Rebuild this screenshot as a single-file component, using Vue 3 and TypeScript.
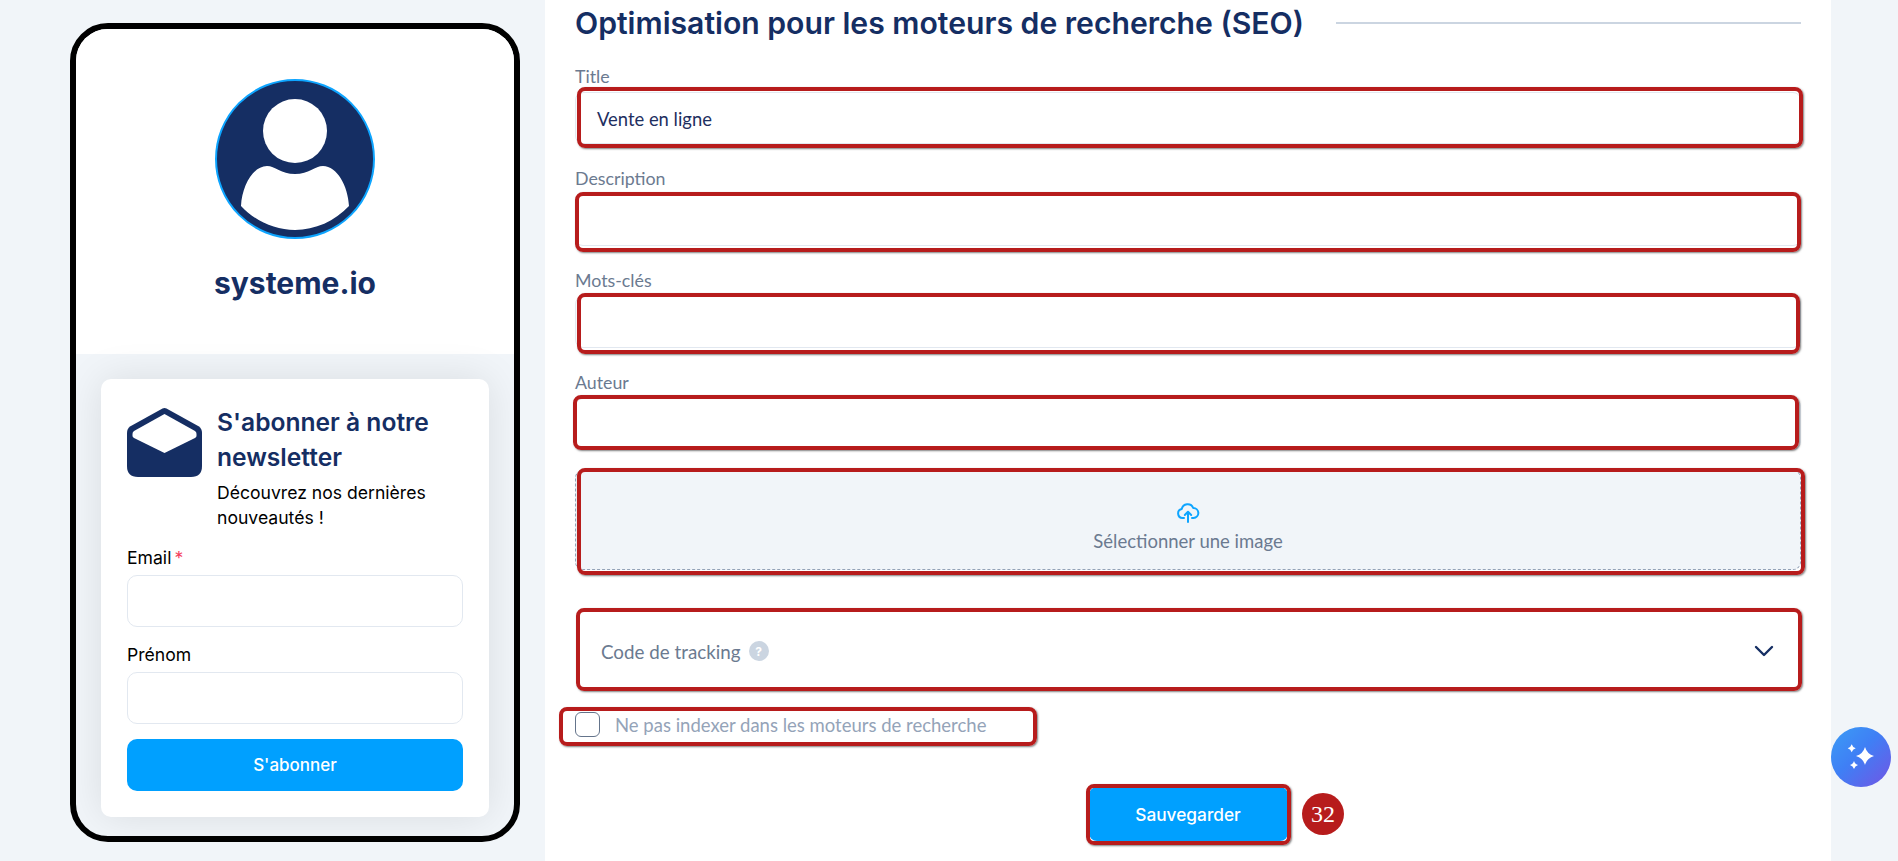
<script setup lang="ts">
const fields: { label: string; value: string }[] = [
  { label: 'Title', value: 'Vente en ligne' },
  { label: 'Description', value: '' },
  { label: 'Mots-clés', value: '' },
  { label: 'Auteur', value: '' },
]
const marks: string[] = ['m-title', 'm-desc', 'm-keys', 'm-author', 'm-image', 'm-code', 'm-check', 'm-save']
</script>

<template>
  <div class="page">
    <aside class="side">
      <div class="phone">
        <section class="hero">
          <svg class="avatar" viewBox="0 0 160 160" aria-hidden="true">
            <circle cx="80" cy="80" r="79" fill="#152e63" stroke="#0ea5ff" stroke-width="2" />
            <circle cx="80" cy="52" r="32" fill="#fff" />
            <path d="M26 127C27 107 38 87 52 87C60 87 66 95 80 95C94 95 100 87 108 87C122 87 133 107 134 127C120 142 100 151 80 151C60 151 40 142 26 127Z" fill="#fff" />
          </svg>
          <h2 class="brand">systeme.io</h2>
        </section>
        <section class="lower">
          <div class="card">
            <div class="news-head">
              <svg class="envelope" viewBox="0 0 75 69" aria-hidden="true">
                <path d="M35.500 .6Q37.500 -.4 39.500 .6L72 18.500Q75 20.500 75 25V58Q75 69 64 69H11Q0 69 0 58V25Q0 20.500 3 18.500Z" fill="#152e63" />
                <path d="M37.500 6L68 23Q69.500 24 69.500 26V28Q69.500 29 68 30L37.500 45L7 30Q5.500 29 5.500 28V26Q5.500 24 7 23Z" fill="#fff" />
              </svg>
              <div class="news-copy">
                <h3>S'abonner à notre newsletter</h3>
                <p>Découvrez nos dernières nouveautés !</p>
              </div>
            </div>
            <label class="sub-label">Email<span class="req">*</span></label>
            <div class="sub-input"></div>
            <label class="sub-label">Prénom</label>
            <div class="sub-input"></div>
            <button class="sub-btn">S'abonner</button>
          </div>
        </section>
      </div>
    </aside>

    <main class="panel">
      <header class="seo-head">
        <h1>Optimisation pour les moteurs de recherche (SEO)</h1>
        <span class="rule"></span>
      </header>
      <div v-for="f in fields" :key="f.label" class="field">
        <label>{{ f.label }}</label>
        <div class="input">{{ f.value }}</div>
      </div>
      <div class="upload">
        <svg width="24" height="24" viewBox="0 0 24 24" fill="none" stroke="#0ea5ff" stroke-width="2" stroke-linecap="round" stroke-linejoin="round" aria-hidden="true">
          <path d="M8 18H6.500a4.500 4.500 0 0 1-.8-8.900A6 6 0 0 1 17.200 8a5 5 0 0 1 .3 10H16" />
          <path d="M12 22v-10M8.800 15 12 11.800 15.200 15" />
        </svg>
        <span>Sélectionner une image</span>
      </div>
      <div class="tracking">
        <span class="tracking-label">Code de tracking</span>
        <span class="help">?</span>
        <svg class="chevron" width="20" height="12" viewBox="0 0 20 12" fill="none" stroke="#152e63" stroke-width="2.400" stroke-linecap="round" stroke-linejoin="round" aria-hidden="true">
          <path d="M2 2l8 8 8-8" />
        </svg>
      </div>
      <div class="check-row">
        <span class="check"></span>
        <span class="check-label">Ne pas indexer dans les moteurs de recherche</span>
      </div>
      <div class="actions">
        <button class="save">Sauvegarder</button>
      </div>
    </main>

    <div class="gutter"></div>

    <div v-for="m in marks" :key="m" class="mark" :class="m"></div>
    <div class="badge">32</div>
    <button class="ai" aria-label="Assistant">
      <svg width="40" height="40" viewBox="0 0 40 40" fill="#fff" aria-hidden="true">
        <path d="M24 10Q26 17 33 19Q26 21 24 28Q22 21 15 19Q22 17 24 10Z" />
        <path d="M10.700 7.300Q11.600 10.400 14.700 11.300Q11.600 12.200 10.700 15.300Q9.800 12.200 6.700 11.300Q9.800 10.400 10.700 7.300Z" />
        <path d="M13 24Q13.900 27.100 17 28Q13.900 28.900 13 32Q12.100 28.900 9 28Q12.100 27.100 13 24Z" />
      </svg>
    </button>
  </div>
</template>

<style>
html, body { margin: 0; background: #f1f5f9; }
</style>

<style scoped>
* { box-sizing: border-box; }
.page {
  position: relative;
  display: grid;
  grid-template-columns: 545px 1286px 67px;
  width: 1898px;
  height: 861px;
  overflow: hidden;
  background: #f1f5f9;
  font-family: Inter, "Liberation Sans", sans-serif;
}
.side { padding: 23px 0 0 70px; }
.phone {
  width: 450px;
  height: 819px;
  border: 6px solid #000;
  border-radius: 38px;
  overflow: hidden;
  background: #f1f5f9;
  display: flex;
  flex-direction: column;
}
.hero {
  height: 325px;
  flex: none;
  background: #fff;
  display: flex;
  flex-direction: column;
  align-items: center;
  padding-top: 50px;
}
.avatar { width: 160px; height: 160px; display: block; }
.brand {
  margin: 24px 0 0;
  font-size: 30px;
  line-height: 40px;
  font-weight: 700;
  color: #152e63;
}
.lower { flex: 1; padding: 25px 25px 0; }
.card {
  height: 438px;
  background: #fff;
  border-radius: 10px;
  padding: 29px 26px 0;
  box-shadow: 0 0 40px rgba(0, 0, 0, 0.1);
}
.news-head { display: flex; gap: 15px; height: 122px; }
.envelope { width: 75px; height: 69px; flex: none; }
.news-copy h3 {
  margin: -3px 0 0;
  font-size: 24.600px;
  line-height: 35px;
  font-weight: 600;
  color: #152e63;
}
.news-copy p {
  margin: 5px 0 0;
  font-size: 17.600px;
  line-height: 25px;
  color: #000;
}
.sub-label {
  display: block;
  margin-top: 16px;
  font-size: 17.600px;
  line-height: 24px;
  color: #000;
}
.req { color: #f43f5e; margin-left: 3px; }
.sub-input {
  height: 52px;
  margin-top: 5px;
  border: 1px solid #e2e8f0;
  border-radius: 10px;
  background: #fff;
}
.sub-btn {
  display: block;
  width: 100%;
  height: 52px;
  margin-top: 15px;
  border: 0;
  border-radius: 10px;
  background: #00a0ff;
  color: #fff;
  font: 500 17px Inter, sans-serif;
}
.panel {
  background: #fff;
  padding: 0 30px;
}
.seo-head {
  display: flex;
  align-items: center;
  height: 46px;
  gap: 32px;
}
.seo-head h1 {
  margin: 0;
  font-size: 30.150px;
  font-weight: 600;
  white-space: nowrap;
  color: #152e63;
}
.rule { flex: 1; height: 2px; background: #cbd5e1; }
.field { height: 102px; padding-top: 18px; }
.field label {
  display: block;
  font-family: Lato, sans-serif;
  font-size: 17.800px;
  line-height: 24px;
  color: #6b7a90;
}
.input {
  height: 52px;
  margin-top: 4px;
  border: 1px solid #e2e8f0;
  border-radius: 8px;
  padding-left: 21px;
  font-family: Lato, sans-serif;
  font-size: 18.400px;
  line-height: 52px;
  color: #1e2f5f;
}
.upload {
  margin-top: 16px;
  height: 100px;
  border: 1px dashed #94a3b8;
  border-radius: 8px;
  background: #f1f5f9;
  display: flex;
  flex-direction: column;
  align-items: center;
  padding-top: 29px;
  gap: 5px;
  font-family: Lato, sans-serif;
  font-size: 18.500px;
  line-height: 24px;
  color: #6b7a90;
}
.tracking {
  margin-top: 40px;
  height: 82px;
  display: flex;
  align-items: center;
  padding: 0 27px 0 26px;
  font-family: Lato, sans-serif;
  font-size: 18.800px;
  color: #6b7a90;
}
.help {
  margin-left: 8px;
  width: 20px;
  height: 20px;
  border-radius: 50%;
  background: #cbd5e1;
  color: #fff;
  font: 700 12px Inter, sans-serif;
  display: flex;
  align-items: center;
  justify-content: center;
}
.chevron { margin-left: auto; }
.check-row {
  margin-top: 20px;
  display: flex;
  align-items: center;
  gap: 15px;
}
.check {
  width: 25px;
  height: 25px;
  border: 1px solid #64748b;
  border-radius: 6px;
}
.check-label {
  font-family: Lato, sans-serif;
  font-size: 18.500px;
  color: #94a3b8;
}
.actions { margin-top: 50px; display: flex; justify-content: center; }
.save {
  width: 199px;
  height: 54px;
  border: 0;
  border-radius: 8px;
  background: #00a0ff;
  color: #fff;
  font: 500 17.300px Inter, sans-serif;
}
.mark {
  position: absolute;
  border: 4px solid #b71c1c;
  border-radius: 8px;
  box-shadow: 1px 1px 2px rgba(0, 0, 0, 0.5);
  pointer-events: none;
}
.m-title { left: 577px; top: 87px; width: 1226px; height: 61px; }
.m-desc { left: 575px; top: 192px; width: 1226px; height: 60px; }
.m-keys { left: 577px; top: 293px; width: 1223px; height: 61px; }
.m-author { left: 573px; top: 395px; width: 1226px; height: 55px; }
.m-image { left: 577px; top: 468px; width: 1228px; height: 107px; }
.m-code { left: 576px; top: 608px; width: 1226px; height: 83px; }
.m-check { left: 559px; top: 707px; width: 478px; height: 39px; }
.m-save { left: 1086px; top: 784px; width: 205px; height: 61px; }
.badge {
  position: absolute;
  left: 1302px;
  top: 793px;
  width: 42px;
  height: 42px;
  border-radius: 50%;
  background: #b71c1c;
  color: #fff;
  font: 24px/42px "Liberation Serif", serif;
  text-align: center;
}
.ai {
  position: absolute;
  left: 1831px;
  top: 727px;
  width: 60px;
  height: 60px;
  padding: 0;
  border: 0;
  border-radius: 50%;
  background: linear-gradient(135deg, #3b9df5 0%, #3f7ff5 45%, #7255e4 100%);
  display: flex;
  align-items: center;
  justify-content: center;
}
</style>
